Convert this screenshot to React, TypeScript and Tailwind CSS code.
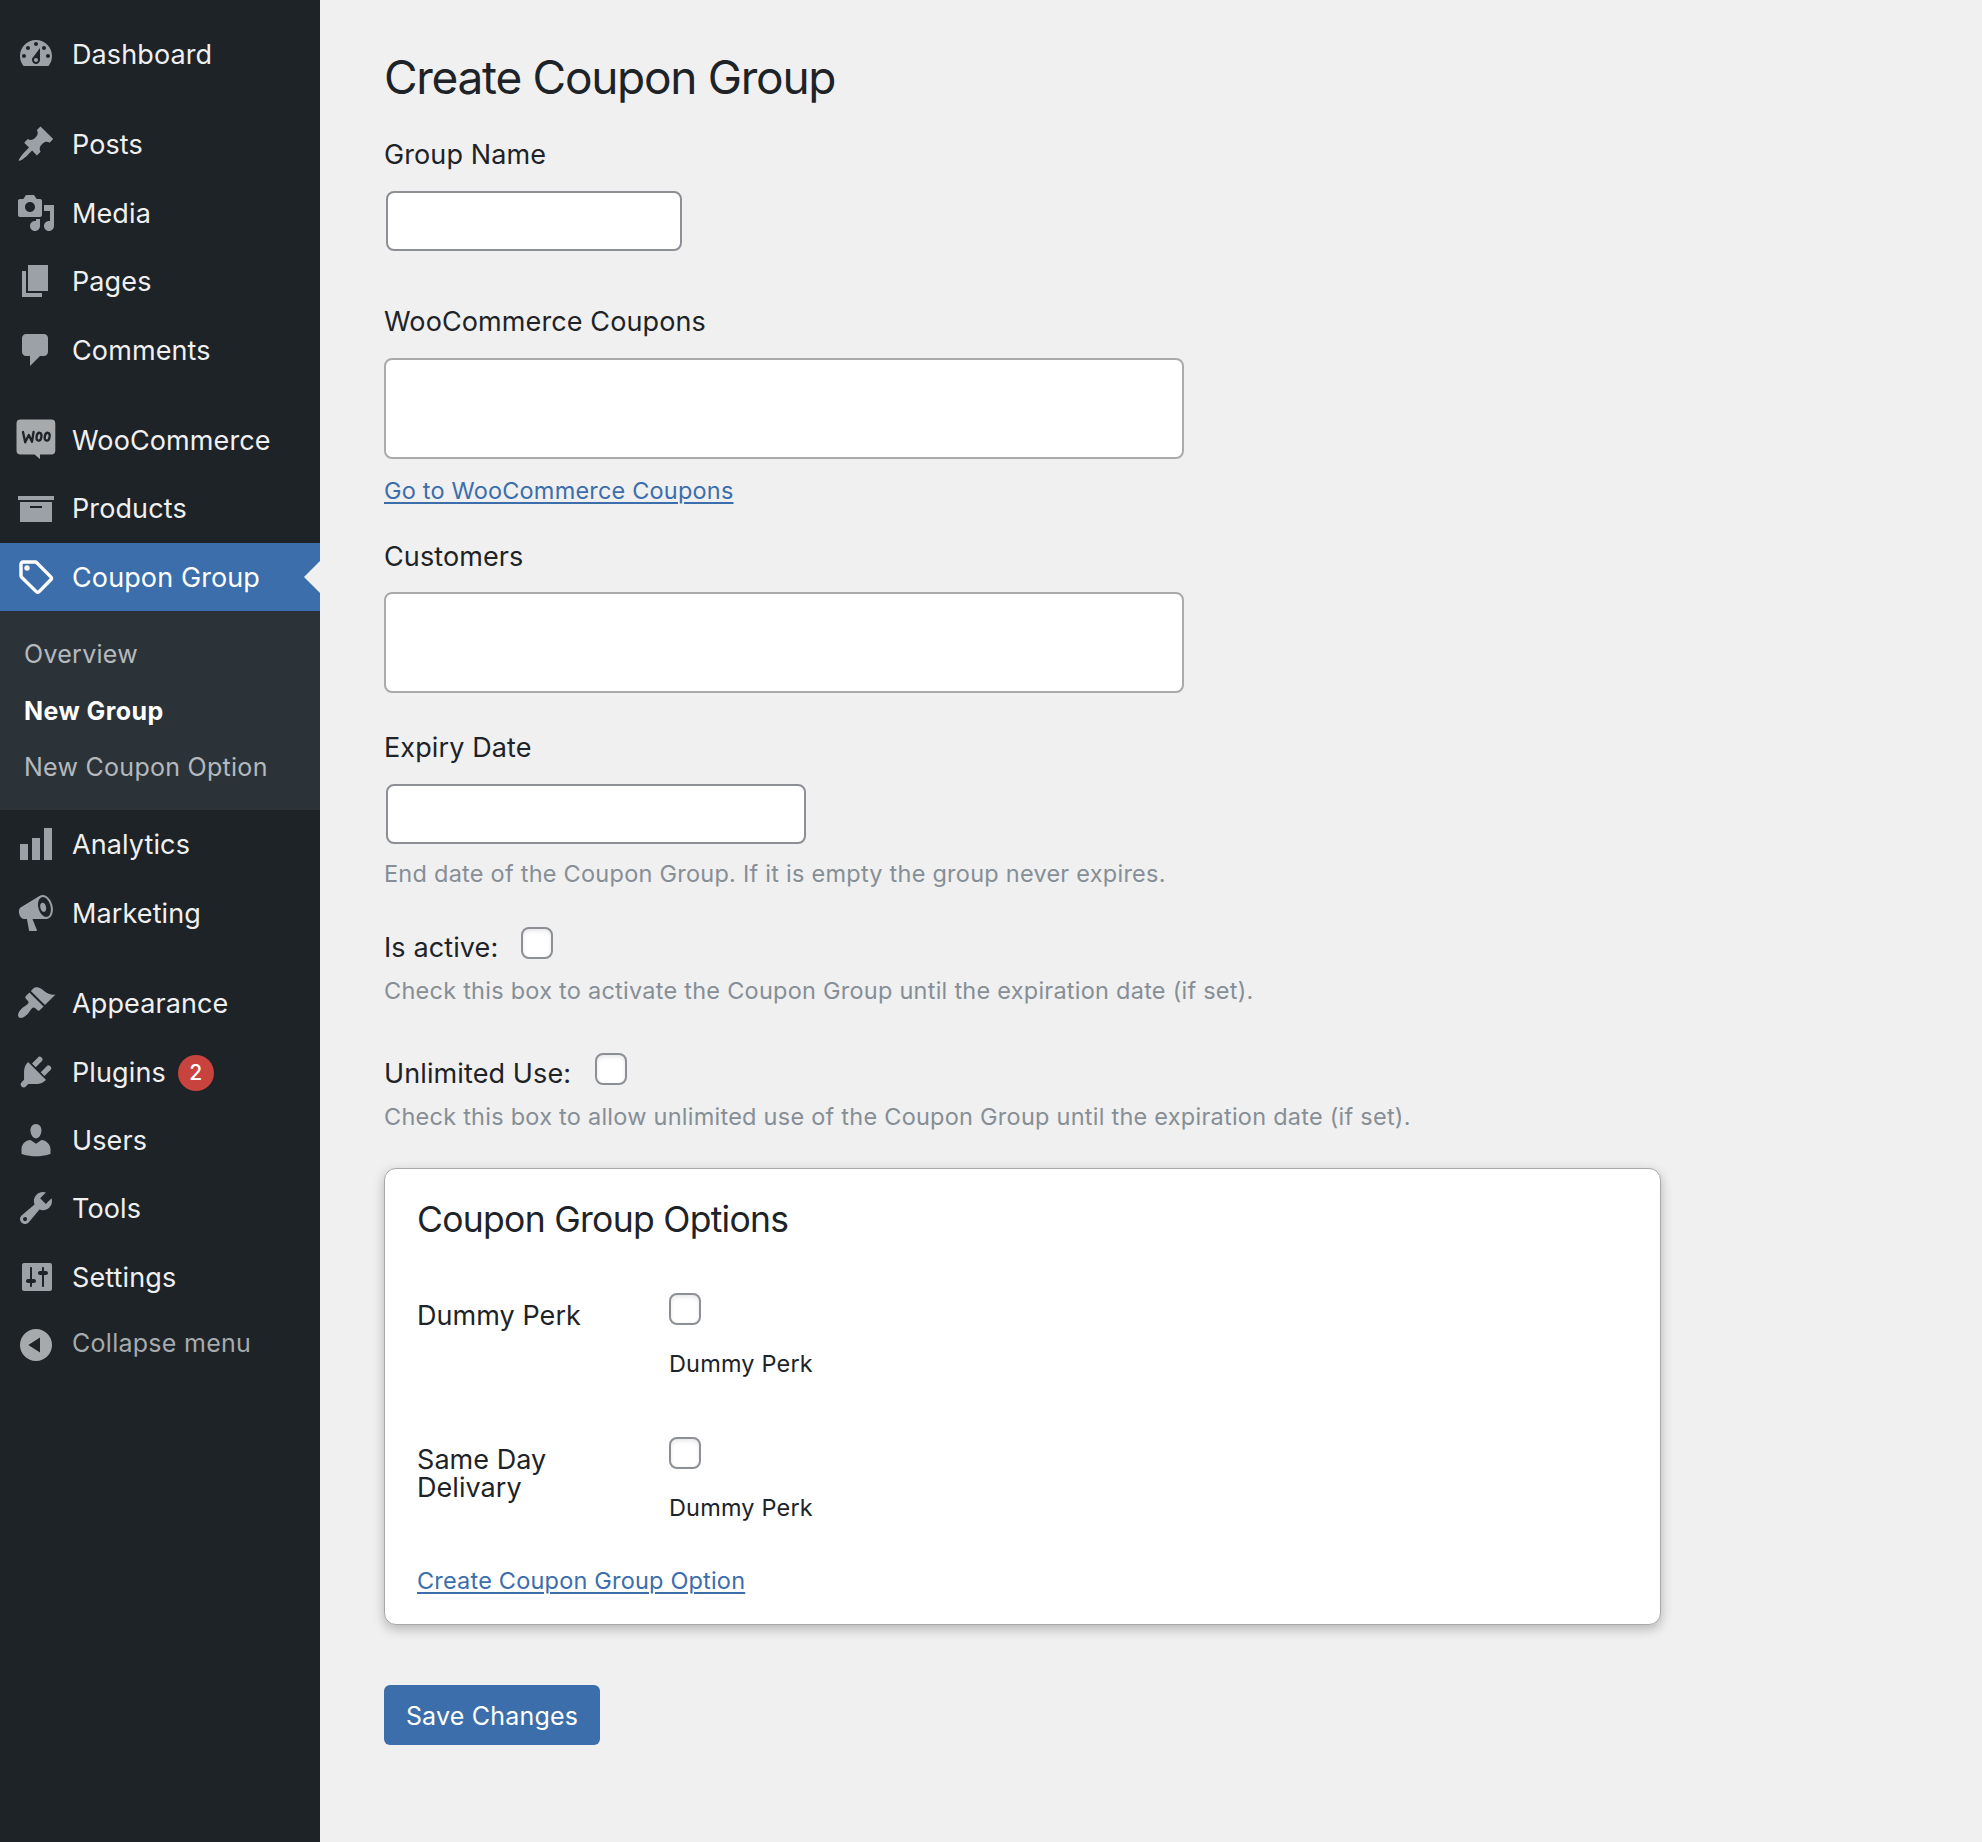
import React from "react";

const paths = {
  dashboard:
    "M3.76 16h12.48c1.1-1.37 1.76-3.11 1.76-5 0-4.42-3.58-8-8-8s-8 3.58-8 8c0 1.89.66 3.63 1.76 5zM10 4c.55 0 1 .45 1 1s-.45 1-1 1-1-.45-1-1 .45-1 1-1zM6 6c.55 0 1 .45 1 1s-.45 1-1 1-1-.45-1-1 .45-1 1-1zm8 0c.55 0 1 .45 1 1s-.45 1-1 1-1-.45-1-1 .45-1 1-1zm-5.37 5.55L12 7v6c0 1.1-.9 2-2 2s-2-.9-2-2c0-.57.24-1.08.63-1.45zM4 10c.55 0 1 .45 1 1s-.45 1-1 1-1-.45-1-1 .45-1 1-1zm12 0c.55 0 1 .45 1 1s-.45 1-1 1-1-.45-1-1 .45-1 1-1zm-5 3c0-.55-.45-1-1-1s-1 .45-1 1 .45 1 1 1 1-.45 1-1z",
  posts:
    "M10.44 3.02l1.82-1.82 6.36 6.35-1.83 1.82c-1.05-.68-2.48-.57-3.41.36l-.75.75c-.92.93-1.04 2.35-.35 3.41l-1.83 1.82-2.41-2.41-2.8 2.79c-.42.42-3.38 2.71-3.8 2.29s1.86-3.39 2.28-3.81l2.79-2.79L4.1 9.36l1.83-1.82c1.05.69 2.48.57 3.4-.36l.75-.75c.93-.92 1.05-2.35.36-3.41z",
  media:
    "M13 11V4c0-.55-.45-1-1-1h-1.67L9 1H5L3.67 3H2c-.55 0-1 .45-1 1v7c0 .55.45 1 1 1h10c.55 0 1-.45 1-1zM7 4.5c1.38 0 2.5 1.12 2.5 2.5S8.38 9.5 7 9.5 4.5 8.38 4.5 7 5.62 4.5 7 4.5zM14 6h5v10.5c0 1.38-1.12 2.5-2.5 2.5S14 17.88 14 16.5s1.12-2.5 2.5-2.5c.17 0 .34.02.5.05V9h-3V6zm-4 8.05V13h2v3.5c0 1.38-1.12 2.5-2.5 2.5S7 17.88 7 16.5 8.12 14 9.5 14c.17 0 .34.02.5.05z",
  pages: "M6 15V2h10v13H6zm-1 1h8v2H3V5h2v11z",
  comments:
    "M5 2h9c1.1 0 2 .9 2 2v7c0 1.1-.9 2-2 2h-2l-5 5v-5H5c-1.1 0-2-.9-2-2V4c0-1.1.9-2 2-2z",
  products: "M19 4v2H1V4h18zM2 7h16v10H2V7zm11 3V9H7v1h6z",
  analytics: "M18 18V2h-4v16h4zm-6 0V7H8v11h4zm-6 0v-8H2v8h4z",
  marketing:
    "M18.15 5.94c.46 1.62.38 3.22-.02 4.48-.42 1.28-1.26 2.18-2.3 2.48-.16.06-.26.06-.4.06-.06.02-.12.02-.18.02-.06.02-.14.02-.22.02h-6.8l2.22 5.5c.02.14-.06.26-.14.34-.08.1-.24.16-.34.16H6.95c-.1 0-.26-.06-.34-.16-.08-.08-.16-.2-.14-.34l-1-5.5H4.25l-.02-.02c-.5.06-1.08-.18-1.54-.62s-.88-1.08-1.06-1.88c-.24-.8-.2-1.56-.02-2.2.18-.62.58-1.08 1.06-1.3l.02-.02 9-5.4c.1-.06.18-.1.24-.16.06-.04.14-.08.24-.12.16-.08.28-.12.5-.18 1.04-.3 2.24.1 3.22.98s1.84 2.24 2.26 3.86zm-2.58 5.98h-.02c.4-.1.74-.34 1.04-.7.58-.7.86-1.76.86-3.04 0-.64-.1-1.3-.28-1.98-.34-1.36-1.02-2.5-1.78-3.24s-1.68-1.1-2.46-.88c-.82.22-1.4.96-1.7 2-.32 1.04-.28 2.36.06 3.72.38 1.36 1 2.5 1.8 3.24.78.74 1.62 1.1 2.48.88zm-2.54-7.08c.22-.04.42-.02.62.04.38.16.76.48 1.02 1s.42 1.2.42 1.78c0 .3-.04.56-.12.8-.18.48-.44.84-.86.94-.34.1-.8-.06-1.14-.4s-.64-.86-.78-1.5c-.18-.62-.12-1.24.02-1.72s.48-.84.82-.94z",
  appearance:
    "M14.48 11.06L7.41 3.99l1.5-1.5c.5-.56 2.3-.47 3.51.32 1.21.8 1.43 1.28 2.91 2.1 1.18.64 2.45 1.26 4.45.85zm-.71.71L6.7 4.7 4.93 6.47c-.39.39-.39 1.02 0 1.41l1.06 1.06c.39.39.39 1.03 0 1.42-.6.6-1.43 1.11-2.21 1.69-.35.26-.7.53-1.01.84C1.43 14.23.4 16.08 1.4 17.07c.99 1 2.84-.03 4.18-1.36.31-.31.58-.66.85-1.02.57-.78 1.08-1.61 1.69-2.21.39-.39 1.02-.39 1.41 0l1.06 1.06c.39.39 1.02.39 1.41 0z",
  plugins:
    "M13.11 4.36L9.87 7.6 8 5.73l3.24-3.24c.35-.34 1.05-.2 1.56.32.52.51.66 1.21.31 1.55zm-8 1.77l.91-1.12 9.01 9.01-1.19.84c-.71.71-2.63 1.16-3.82 1.16H6.14L4.9 17.26c-.59.59-1.54.59-2.12 0-.59-.58-.59-1.53 0-2.12l1.24-1.24v-3.88c0-1.13.4-3.19 1.09-3.89zm7.26 3.97l3.24-3.24c.34-.35 1.04-.21 1.55.31.52.51.66 1.21.31 1.55l-3.24 3.25z",
  users:
    "M10 9.25c-2.27 0-2.73-3.44-2.73-3.44C7 4.02 7.82 2 9.97 2c2.16 0 2.98 2.02 2.71 3.81 0 0-.41 3.44-2.68 3.44zm0 2.57L12.72 10c2.39 0 4.52 2.33 4.52 4.53v2.49s-3.65 1.13-7.24 1.13c-3.65 0-7.24-1.13-7.24-1.13v-2.49c0-2.25 1.94-4.48 4.47-4.48z",
  tools:
    "M16.68 9.77c-1.34 1.34-3.3 1.67-4.95.99l-5.41 6.52c-.99.99-2.59.99-3.58 0s-.99-2.59 0-3.57l6.52-5.42c-.68-1.65-.35-3.61.99-4.95 1.28-1.28 3.12-1.62 4.72-1.06l-2.89 2.89 2.82 2.82 2.86-2.87c.53 1.58.18 3.39-1.08 4.65zM3.81 16.21c.4.39 1.04.39 1.43 0 .4-.4.4-1.04 0-1.43-.39-.4-1.03-.4-1.43 0-.39.39-.39 1.03 0 1.43z",
  settings:
    "M18 16V4c0-.55-.45-1-1-1H4c-.55 0-1 .45-1 1v12c0 .55.45 1 1 1h13c.55 0 1-.45 1-1zM8 11h1c.55 0 1 .45 1 1s-.45 1-1 1H8v1.5c0 .28-.22.5-.5.5s-.5-.22-.5-.5V13H6c-.55 0-1-.45-1-1s.45-1 1-1h1V5.5c0-.28.22-.5.5-.5s.5.22.5.5V11zm5-2h-1c-.55 0-1-.45-1-1s.45-1 1-1h1V5.5c0-.28.22-.5.5-.5s.5.22.5.5V7h1c.55 0 1 .45 1 1s-.45 1-1 1h-1v5.5c0 .28-.22.5-.5.5s-.5-.22-.5-.5V9z",
};

function Dashicon({ name }: { name: keyof typeof paths }) {
  return (
    <svg viewBox="0 0 20 20" className="size-10 fill-[#9ca1a7]" fillRule="evenodd">
      <path d={paths[name]} />
    </svg>
  );
}

function WooIcon() {
  return (
    <svg viewBox="0 0 40 40" className="size-10 overflow-visible">
      <path
        fill="#a7aaad"
        d="M4.500 -.4h31A4 4 0 0 1 39.300 3.600v27a4 4 0 0 1-4 4H24v4.500L18.500 34.600h-14a4 4 0 0 1-4-4V3.600a4 4 0 0 1 4-4z"
      />
      <g fill="none" stroke="#1d2327" strokeWidth="2.300" strokeLinecap="round" strokeLinejoin="round">
        <path d="M7 12l2.200 10.300 3.600-7.300 3.200 6.800 1.600-10" />
        <ellipse cx="23" cy="16.700" rx="2.400" ry="4" transform="rotate(10 23 16.700)" />
        <ellipse cx="31.200" cy="16.700" rx="2.400" ry="4" transform="rotate(10 31.200 16.700)" />
      </g>
    </svg>
  );
}

function TagIcon() {
  return (
    <svg viewBox="0 0 40 40" className="size-10">
      <path
        d="M7 5h12.300a2 2 0 0 1 1.400.6l14.100 14.300a2 2 0 0 1 0 2.800L23.100 34.600a2 2 0 0 1-2.800 0L5.600 20.200A2 2 0 0 1 5 18.800V7a2 2 0 0 1 2-2z"
        fill="none"
        stroke="#fff"
        strokeWidth="3.400"
      />
      <circle cx="11" cy="11" r="2.700" fill="#fff" />
    </svg>
  );
}

function MenuItem({ icon, label, badge }: { icon: React.ReactNode; label: string; badge?: string }) {
  return (
    <a className="flex h-[68.4px] items-start pl-4 pt-3.5 text-[#f0f0f1]">
      {icon}
      <span className="ml-4 text-[27px] leading-[42px] tracking-[0.004em]">{label}</span>
      {badge && (
        <span className="ml-3 mt-[3px] flex size-9 items-center justify-center rounded-full bg-[#c9433e] text-[21px] font-medium text-white">
          {badge}
        </span>
      )}
    </a>
  );
}

function Sidebar() {
  return (
    <nav className="w-80 shrink-0 bg-[#1d2327] pt-5">
      <MenuItem icon={<Dashicon name="dashboard" />} label="Dashboard" />
      <div className="h-[22px]" />
      <MenuItem icon={<Dashicon name="posts" />} label="Posts" />
      <MenuItem icon={<Dashicon name="media" />} label="Media" />
      <MenuItem icon={<Dashicon name="pages" />} label="Pages" />
      <MenuItem icon={<Dashicon name="comments" />} label="Comments" />
      <div className="h-[22px]" />
      <MenuItem icon={<WooIcon />} label="WooCommerce" />
      <MenuItem icon={<Dashicon name="products" />} label="Products" />
      <div className="relative bg-[#3b6eab] [&_a]:text-white">
        <MenuItem icon={<TagIcon />} label="Coupon Group" />
        <span className="absolute right-0 top-[18px] border-y-[16px] border-r-[16px] border-y-transparent border-r-[#f0f0f0]" />
      </div>
      <ul className="bg-[#2c3338] pb-[15px] pl-6 pt-[15px] text-[25px] leading-[56.4px] tracking-[0.011em] text-[#b4b9be]">
        <li>Overview</li>
        <li className="font-bold tracking-[0.018em] text-white">New Group</li>
        <li>New Coupon Option</li>
      </ul>
      <MenuItem icon={<Dashicon name="analytics" />} label="Analytics" />
      <MenuItem icon={<Dashicon name="marketing" />} label="Marketing" />
      <div className="h-[22px]" />
      <MenuItem icon={<Dashicon name="appearance" />} label="Appearance" />
      <MenuItem icon={<Dashicon name="plugins" />} label="Plugins" badge="2" />
      <MenuItem icon={<Dashicon name="users" />} label="Users" />
      <MenuItem icon={<Dashicon name="tools" />} label="Tools" />
      <MenuItem icon={<Dashicon name="settings" />} label="Settings" />
      <button className="flex items-start pl-4 pt-3.5 text-[#a7aaad]">
        <svg viewBox="0 0 40 40" className="size-10 fill-[#a7aaad]" fillRule="evenodd">
          <path d="M20 4a16 16 0 1 0 0 32a16 16 0 1 0 0-32zM24 12.500v15L12.300 20z" />
        </svg>
        <span className="ml-4 text-[25px] leading-[36px] tracking-[0.011em]">Collapse menu</span>
      </button>
    </nav>
  );
}

const label = "h-9 text-[27px] leading-[38px] tracking-[0.004em] whitespace-nowrap";
const small = "h-8 text-[23.5px] leading-[34px] whitespace-nowrap";
const hint = "tracking-[0.0105em] text-[#868e96]";
const link = "block w-max tracking-[0.008em] text-[#3b6eab] underline decoration-2 underline-offset-[3px]";

function Checkbox() {
  return (
    <input
      type="checkbox"
      className="block size-8 shrink-0 appearance-none rounded-lg border-2 border-[#8c8f94] bg-white shadow-[inset_0_2px_4px_rgba(0,0,0,0.1)]"
    />
  );
}

function Option({ name, description }: { name: string; description: string }) {
  return (
    <div className="flex h-[86px] items-start">
      <div className="w-[252px] pr-[70px] pt-[9px] text-[27px] leading-[28px] tracking-[0.002em]">{name}</div>
      <div>
        <Checkbox />
        <p className={`${small} mt-[22px] tracking-[0.007em]`}>{description}</p>
      </div>
    </div>
  );
}

export default function App() {
  return (
    <div className="flex h-[1842px] w-[1982px] overflow-hidden bg-[#f0f0f0] font-['Inter',sans-serif] text-[#1d2327]">
      <Sidebar />
      <main className="flex flex-col items-start pl-16 pt-[49px]">
        <h1 className="text-[46px] leading-[56px] tracking-[-0.028em]">Create Coupon Group</h1>

        <label className={`${label} mt-[31px]`}>Group Name</label>
        <input className="ml-0.5 mt-[19px] h-[60px] w-[296px] rounded-lg border-2 border-[#8c8f94] bg-white" />

        <label className={`${label} mt-[52px]`}>WooCommerce Coupons</label>
        <div className="mt-[19px] h-[101px] w-[800px] rounded-lg border-2 border-[#aaa] bg-white" />
        <a className={`${small} ${link} mt-[15px]`}>Go to WooCommerce Coupons</a>

        <label className={`${label} mt-8`}>Customers</label>
        <div className="mt-[18px] h-[101px] w-[800px] rounded-lg border-2 border-[#aaa] bg-white" />

        <label className={`${label} mt-9`}>Expiry Date</label>
        <input className="ml-0.5 mt-[19px] h-[60px] w-[420px] rounded-lg border-2 border-[#8c8f94] bg-white" />
        <p className={`${small} ${hint} mt-[13px]`}>
          End date of the Coupon Group. If it is empty the group never expires.
        </p>

        <div className="mt-[38px] flex h-[38px] items-start">
          <label className={`${label} w-[137px] pt-0.5`}>Is active:</label>
          <Checkbox />
        </div>
        <p className={`${small} ${hint} mt-[9px]`}>
          Check this box to activate the Coupon Group until the expiration date (if set).
        </p>

        <div className="mt-[47px] flex h-[38px] items-start">
          <label className={`${label} w-[211px] pt-0.5`}>Unlimited Use:</label>
          <Checkbox />
        </div>
        <p className={`${small} ${hint} mt-[9px]`}>
          Check this box to allow unlimited use of the Coupon Group until the expiration date (if set).
        </p>

        <section className="mt-9 h-[457px] w-[1277px] rounded-xl border border-[#a9a9a9] bg-white pl-8 pt-[27px] shadow-[0_4px_12px_rgba(0,0,0,0.25)]">
          <h2 className="mb-[49px] text-[35.5px] leading-[48px] tracking-[-0.020em]">Coupon Group Options</h2>
          <Option name="Dummy Perk" description="Dummy Perk" />
          <div className="h-[58px]" />
          <Option name="Same Day Delivary" description="Dummy Perk" />
          <a className={`${small} ${link} mt-[41px]`}>Create Coupon Group Option</a>
        </section>

        <button className="mt-[60px] h-[60px] w-[216px] rounded-md bg-[#3b6eab] pt-[3px] text-[25px] tracking-[0.008em] text-white">
          Save Changes
        </button>
      </main>
    </div>
  );
}
